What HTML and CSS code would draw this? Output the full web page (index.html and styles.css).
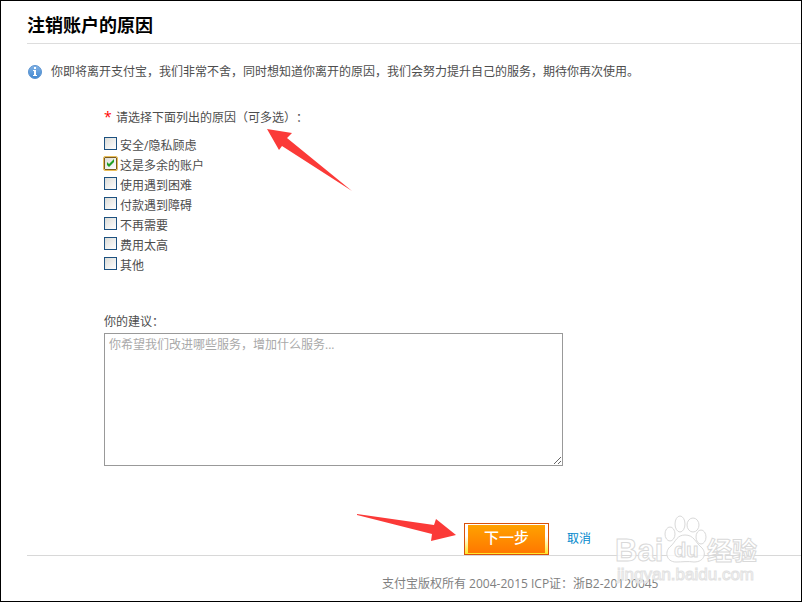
FILE: index.html
```html
<!DOCTYPE html>
<html lang="zh-CN">
<head>
  <meta charset="utf-8">
  <title>注销账户的原因</title>
  <meta name="viewport" content="width=device-width, initial-scale=1.0">
  <link rel="stylesheet" href="styles.css">
</head>
<body>
<div class="page">
  <h1>注销账户的原因</h1>
  <div class="notice">
    <svg class="notice-icon" viewBox="0 0 14 14">
      <defs>
        <linearGradient id="infoBg" x1="0" y1="0" x2="0" y2="1">
          <stop offset="0" stop-color="#84b4e6"/>
          <stop offset="1" stop-color="#3f86d0"/>
        </linearGradient>
      </defs>
      <circle cx="7" cy="7" r="6.5" fill="url(#infoBg)" stroke="#5b93d0"/>
      <path d="M6 2h2v2H6zM5 5h3v5h1v1H5v-1h1V6H5z" fill="#fff"/>
    </svg>
    <p>你即将离开支付宝，我们非常不舍，同时想知道你离开的原因，我们会努力提升自己的服务，期待你再次使用。</p>
  </div>

  <form class="reason-form">
    <fieldset>
      <legend><span class="required">*</span>请选择下面列出的原因（可多选）：</legend>
      <label class="reason"><input type="checkbox" name="reason"><span>安全/隐私顾虑</span></label>
      <label class="reason"><input type="checkbox" name="reason" checked><span>这是多余的账户</span></label>
      <label class="reason"><input type="checkbox" name="reason"><span>使用遇到困难</span></label>
      <label class="reason"><input type="checkbox" name="reason"><span>付款遇到障碍</span></label>
      <label class="reason"><input type="checkbox" name="reason"><span>不再需要</span></label>
      <label class="reason"><input type="checkbox" name="reason"><span>费用太高</span></label>
      <label class="reason"><input type="checkbox" name="reason"><span>其他</span></label>
    </fieldset>
    <label class="advice-label" for="advice">你的建议：</label>
    <textarea id="advice" placeholder="你希望我们改进哪些服务，增加什么服务..."></textarea>
    <div class="actions">
      <button type="submit" class="next-btn">下一步</button>
      <a href="#">取消</a>
    </div>
  </form>

  <footer>支付宝版权所有 2004-2015 ICP证：浙B2-20120045</footer>

  <svg class="arrow arrow-top" viewBox="0 0 86 63">
    <path d="M0 0L25 4L20 9L85 62L15 17L12 21Z"/>
  </svg>
  <svg class="arrow arrow-bottom" viewBox="0 0 100 28">
    <path d="M0 0L77 11L79 5L99 21L74 27L75 20L0 1Z"/>
  </svg>

  <svg class="watermark" viewBox="0 0 150 76">
    <g class="mark">
      <text class="brand" x="5" y="51">Bai</text>
      <ellipse cx="60" cy="24" rx="5" ry="7"/>
      <ellipse cx="70" cy="14" rx="5" ry="8"/>
      <ellipse cx="83" cy="15" rx="6" ry="7"/>
      <ellipse cx="91" cy="27" rx="5" ry="7"/>
      <path d="M75 25C67 25 66 31 61 36C54 41 56 52 66 52C72 52 78 51 84 52C95 52 97 42 91 37C85 32 84 25 75 25Z"/>
      <text class="du" x="64" y="47">du</text>
      <text class="brand-cn" x="97" y="50">经验</text>
      <text class="site" x="7" y="70">jingyan.baidu.com</text>
    </g>
  </svg>
</div>
</body>
</html>
```
FILE: styles.css
```css
* {
  box-sizing: border-box;
}
body {
  margin: 0;
  background: #fff;
  color: #4d4d4d;
  font-family: "Open Sans", "Noto Sans CJK SC", sans-serif;
  font-size: 12px;
  line-height: 20px;
  text-spacing-trim: space-all;
}
.page {
  position: relative;
  min-height: 100vh;
  padding-left: 26px;
  border: 1px solid #000;
  overflow: hidden;
}
h1 {
  margin: 0;
  padding: 12px 0 6px;
  border-bottom: 1px solid #ddd;
  color: #000;
  font-size: 18px;
  line-height: 24px;
}
.notice {
  display: flex;
  align-items: center;
  gap: 9px;
  padding: 18px 0 0 1px;
}
.notice-icon {
  width: 14px;
  height: 14px;
  flex: none;
}
.notice p {
  margin: 0;
}
.reason-form {
  padding-left: 77px;
  border-bottom: 1px solid #d8d8d8;
}
fieldset {
  margin: 0;
  padding: 0;
  border: 0;
}
legend {
  padding: 26px 0 8px;
}
.required {
  display: inline-block;
  width: 12px;
  color: #f00;
  font-size: 14px;
  line-height: 12px;
}
.reason {
  display: flex;
  gap: 3px;
  width: fit-content;
  height: 20px;
}
.reason input {
  appearance: none;
  width: 13px;
  height: 13px;
  margin: 1px 0 0;
  border: 1px solid #1c5180;
  background: linear-gradient(135deg, #dcdcd7, #fff);
}
.reason input:checked {
  border-color: #7a5c1e;
  outline: 1px solid #eabf5c;
  border-radius: 1px;
  background: url("data:image/svg+xml,%3Csvg xmlns='http://www.w3.org/2000/svg' viewBox='0 0 11 11'%3E%3Cpath d='M2 4v3l2 2 5-5V1L4 6z' fill='%2321a121'/%3E%3C/svg%3E"), linear-gradient(135deg, #dcdcd7, #fff);
}
.advice-label {
  display: block;
  margin-top: 36px;
}
textarea {
  display: block;
  width: 459px;
  max-width: 100%;
  height: 133px;
  margin-top: 1px;
  padding: 1px 4px;
  border: 1px solid #999;
  font: inherit;
  outline: none;
}
textarea::placeholder {
  color: #a9a9a9;
}
.actions {
  display: flex;
  align-items: center;
  gap: 18px;
  padding: 57px 0 0 360px;
}
.next-btn {
  width: 85px;
  height: 32px;
  padding: 0 0 4px;
  border: 1px solid #d9500b;
  background: linear-gradient(#ffa200, #ff7800) 3px 1px / 77px 28px no-repeat, linear-gradient(#fff 40%, #ffe628);
  color: #fff;
  font-family: inherit;
  font-size: 15px;
  font-weight: 500;
  line-height: 24px;
  cursor: pointer;
}
.actions a {
  color: #08c;
  text-decoration: none;
}
footer {
  padding: 18px 0 0 355px;
  color: #808080;
}
/* pointers and site mark drawn over the form */
.arrow {
  position: absolute;
  fill: #fb3a38;
  pointer-events: none;
}
.arrow-top {
  top: 128px;
  left: 266px;
  width: 86px;
  height: 63px;
}
.arrow-bottom {
  top: 513px;
  left: 356px;
  width: 100px;
  height: 28px;
}
.watermark {
  position: absolute;
  top: 509px;
  left: 609px;
  width: 150px;
  height: 76px;
  pointer-events: none;
}
.mark {
  fill: #fff;
  fill-opacity: 0.8;
  stroke: #d9d9d9;
  font-family: "Liberation Sans", "Noto Sans CJK SC", sans-serif;
  font-weight: bold;
}
.mark text {
  stroke-width: 1px;
}
.brand {
  font-size: 31px;
}
.du {
  font-size: 20px;
}
.brand-cn {
  font-size: 25px;
}
.mark .site {
  fill: #fff;
  stroke: #e2e2e2;
  font-size: 17px;
  font-weight: normal;
}
```
